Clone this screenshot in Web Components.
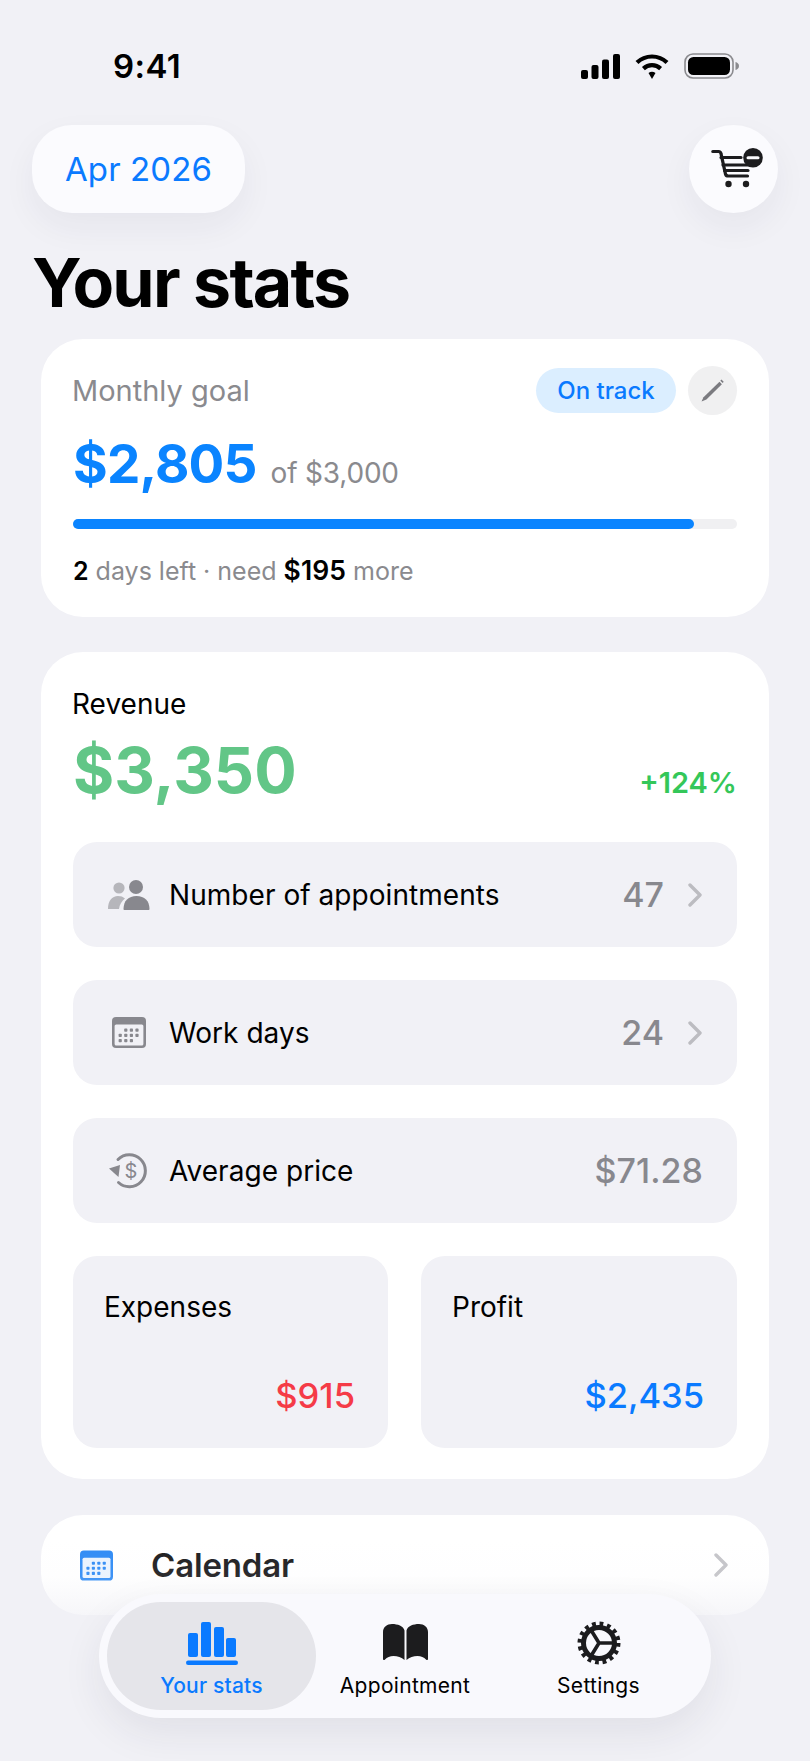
<!DOCTYPE html>
<html lang="en">
<head>
<meta charset="utf-8">
<title>Your stats</title>
<style>
  html, body { margin: 0; background: #f1f1f6; }
  body { font-family: Inter, "Noto Sans", "Liberation Sans", sans-serif; color: #000; }
</style>
</head>
<body>

<stats-app>
  <status-bar time="9:41"></status-bar>
  <top-bar label="Apr 2026"></top-bar>
  <page-title>Your stats</page-title>

  <goal-card></goal-card>

  <revenue-card>
    <stat-row icon="people" value="47" chevron>Number of appointments</stat-row>
    <stat-row icon="calendar" value="24" chevron>Work days</stat-row>
    <stat-row icon="price" value="$71.28">Average price</stat-row>
    <mini-stats>
      <mini-stat label="Expenses" value="$915" color="#f53b47"></mini-stat>
      <mini-stat label="Profit" value="$2,435" color="#0a7aff"></mini-stat>
    </mini-stats>
  </revenue-card>

  <calendar-row>Calendar</calendar-row>

  <tab-bar>
    <tab-item icon="bars" active>Your stats</tab-item>
    <tab-item icon="book">Appointment</tab-item>
    <tab-item icon="gear">Settings</tab-item>
  </tab-bar>
</stats-app>

<script>
const chevron = (c) => `<svg width="16" height="24" viewBox="0 0 16 24" fill="none"><path d="M3 2 13 12 3 22" stroke="${c}" stroke-width="3.4" stroke-linecap="round" stroke-linejoin="round"/></svg>`

const calendarIcon = (w, h, main, bg) => {
  let dots = ""
  // 3 rows of dots, the first one starts at the second column
  for (let r = 0; r < 3; r++) {
    for (let c = 0; c < 4; c++) {
      if (r == 0 && c == 0) continue
      if (r == 2 && c == 3) continue
      dots += `<rect x="${6.6 + c * 5.6}" y="${11.6 + r * 5.2}" width="3.2" height="3.2" rx=".8" fill="${main}"/>`
    }
  }
  return `<svg width="${w}" height="${h}" viewBox="0 0 34 31"><rect width="34" height="31" rx="4" fill="${main}"/><rect x="2.600" y="7.500" width="28.800" height="21" rx="1.600" fill="${bg}"/>${dots}</svg>`
}

const icons = {
  people: `<svg width="42" height="30" viewBox="0 0 42 30"><circle cx="11" cy="8" r="5.6" fill="#b6b6bb"/><path d="M0 29c0-8 4-13 10-13 3 0 5 .8 7 2.5-3 2.500-5.500 6-6 10.500z" fill="#b6b6bb"/><circle cx="28" cy="7" r="7" fill="#88888e"/><path d="M15.500 29c0-8 5-13 13-13s13 5 13 13c0 .6-.4 1-1 1h-24c-.6 0-1-.4-1-1z" fill="#88888e"/></svg>`,
  calendar: calendarIcon(34, 31, "#88888e", "#f1f1f6"),
  price: `<svg width="40" height="36" viewBox="0 0 40 36" fill="none"><path d="M9 6.500A16 16 0 1 1 9.500 29.500" stroke="#88888e" stroke-width="3" stroke-linecap="round"/><path d="M0 15.500 11 12 9.500 24z" fill="#88888e"/><text x="22" y="25" text-anchor="middle" font-family="Inter, sans-serif" font-size="20" fill="#88888e">$</text></svg>`,
  bars: `<svg width="52" height="43" viewBox="0 0 52 43" fill="#0a7aff"><rect x="2" y="11" width="10" height="24" rx="2"/><rect x="15" y="0" width="10" height="35" rx="2"/><rect x="28" y="5" width="10" height="30" rx="2"/><rect x="40" y="16" width="10" height="19" rx="2"/><rect y="38.500" width="52" height="4.500" rx="2.200"/></svg>`,
  book: `<svg width="45" height="38" viewBox="0 0 45 38" fill="#1c1c1e"><path d="M0 8C0 3 4 0 9 0c5.500 0 11.500 2 12.500 6.500V36c-3-2.800-7-4-11-4-3.500 0-6.500 1.200-8.500 3.600-.8.900-2 .5-2-.6z"/><path d="M45 8c0-5-4-8-9-8-5.500 0-11.500 2-12.500 6.500V36c3-2.800 7-4 11-4 3.500 0 6.500 1.200 8.500 3.600.8.900 2 .5 2-.6z"/></svg>`,
  gear: `<svg width="44" height="44" viewBox="0 0 44 44" fill="none" stroke="#1c1c1e"><circle cx="22" cy="22" r="15.500" stroke-width="5"/><circle cx="22" cy="22" r="19" stroke-width="5" stroke-dasharray="3.730 3.730"/><path d="M22 22 37 22M22 22 14 9M22 22 14 35" stroke-width="3.600"/></svg>`
}

const define = (name, css, html) => {
  customElements.define(name, class extends HTMLElement {
    connectedCallback() {
      if (this.shadowRoot) return
      this.attachShadow({ mode: "open" })
      this.shadowRoot.innerHTML = `<style>${css}</style>` + html(this)
    }
  })
}

define("stats-app", `
  :host { display: block; position: relative; width: 810px; height: 1761px; overflow: hidden; background: #f1f1f6; }
  .fade { position: absolute; left: 0; right: 0; top: 1540px; height: 82px; background: linear-gradient(rgba(241,241,246,0), rgba(241,241,246,.08) 45%, rgba(241,241,246,.75)); pointer-events: none; z-index: 1; }
`, () => `
  <slot></slot>
  <div class="fade"></div>
`)

define("page-title", `
  :host { display: block; height: 126px; box-sizing: border-box; padding: 29px 0 0 32px; font-size: 68px; line-height: 80px; font-weight: 700; letter-spacing: -1.8px; }
`, () => `<slot></slot>`)

define("status-bar", `
  :host { display: flex; align-items: center; justify-content: space-between; height: 52px; padding: 40px 71px 33px 113px; font-family: Inter, sans-serif; }
  .time { font-size: 33px; font-weight: 600; letter-spacing: .4px; line-height: 52px; }
  .icons { display: flex; align-items: center; gap: 15px; }
`, (el) => `
  <span class="time">${el.getAttribute("time")}</span>
  <span class="icons">
    <svg width="39" height="25" viewBox="0 0 39 25"><rect y="16" width="7" height="9" rx="2"/><rect x="10.500" y="11" width="7" height="14" rx="2"/><rect x="21" y="5.500" width="7" height="19.500" rx="2"/><rect x="32" y="0" width="7" height="25" rx="2"/></svg>
    <svg width="34" height="25" viewBox="0 0 34 25" fill="none" stroke="#000" stroke-width="4.200"><path d="M2 8.600A21.500 21.500 0 0 1 32 8.600"/><path d="M8.400 14.600A12.600 12.600 0 0 1 25.600 14.600"/><path d="M13.500 19 17 25 20.500 19A6 6 0 0 0 13.500 19Z" fill="#000" stroke="none"/></svg>
    <svg width="55" height="26" viewBox="0 0 55 26"><rect x="1" y="1" width="48" height="24" rx="8" fill="none" stroke="#8a8a8e" stroke-width="1.600"/><rect x="4" y="4" width="42" height="18" rx="5.500"/><path d="M51.500 9c2 .5 3.500 2 3.500 4s-1.500 3.500-3.500 4z" fill="#8a8a8e"/></svg>
  </span>
`)

define("top-bar", `
  :host { display: flex; justify-content: space-between; padding: 0 32px; height: 88px; }
  .pill, .round { background: #fbfbfe; box-shadow: 0 14px 34px rgba(40,40,70,.055); display: flex; align-items: center; justify-content: center; }
  .pill { width: 213px; height: 88px; border-radius: 40px; color: #0a7aff; font-size: 33px; font-weight: 400; letter-spacing: .1px; }
  .round { width: 89px; height: 88px; border-radius: 50%; }
  .round svg { margin-left: 6px; }
`, (el) => `
  <div class="pill">${el.getAttribute("label")}</div>
  <div class="round">
    <svg width="52" height="42" viewBox="0 0 52 42" fill="none" stroke="#1c1c1e" stroke-width="3.200" stroke-linecap="round">
      <path d="M1.800 3.500H7.500C9 3.500 9.800 4.500 10 5.700L14.500 26C14.900 27.500 15.800 28 17.200 28H36.500"/>
      <path d="M10 9.500H30M12 17H40M13.500 22.500H37" />
      <circle cx="17.500" cy="36" r="3.200" fill="#1c1c1e" stroke="none"/><circle cx="35" cy="36" r="3.200" fill="#1c1c1e" stroke="none"/>
      <circle cx="42" cy="9.800" r="9.800" fill="#1c1c1e" stroke="none"/><path d="M37 9.800H47" stroke="#fbfbfe" stroke-width="3"/>
    </svg>
  </div>
`)

define("goal-card", `
  :host { display: block; box-sizing: border-box; width: 728px; height: 278px; margin: 0 0 35px 41px; padding: 27px 32px 0; background: #fff; border-radius: 42px; }
  .head { display: flex; align-items: center; height: 49px; }
  .name { flex: 1; color: #8a8a8e; font-size: 29px; letter-spacing: 0; margin-left: -1px; }
  .badge { width: 140px; height: 45px; border-radius: 23px; background: #dbeeff; color: #0a7aff; font-size: 24px; font-weight: 500; display: flex; align-items: center; justify-content: center; }
  .edit { width: 49px; height: 49px; border-radius: 50%; background: #f0f0f1; margin-left: 12px; display: flex; align-items: center; justify-content: center; }
  .amount { display: flex; align-items: baseline; gap: 14px; margin-top: 10px; height: 75px; line-height: 79px; }
  .big { color: #0a84ff; font-size: 53px; font-weight: 700; letter-spacing: -.8px; }
  .of { color: #8a8a8e; font-size: 28px; letter-spacing: -.2px; }
  .track { height: 10px; margin-top: 19px; border-radius: 5px; background: #f0f0f2; }
  .fill { width: 621px; height: 10px; border-radius: 5px; background: #0a84ff; }
  .left { margin-top: 23px; color: #8a8a8e; font-size: 25px; line-height: 36px; }
  .left b { color: #000; font-weight: 600; }
  .left b + b { font-size: 26.500px; letter-spacing: .1px; }
`, () => `
  <div class="head">
    <span class="name">Monthly goal</span>
    <span class="badge">On track</span>
    <span class="edit"><svg width="25" height="25" viewBox="0 0 25 25"><path d="M19.500 3.800 21.900 6.200 6.400 21.500 1.500 23.500 3.500 19.200z" fill="#7b7b80"/><path d="M21.400 1.400 23.700 3.700 22.700 5 20.300 2.700z" fill="#7b7b80"/></svg></span>
  </div>
  <div class="amount"><span class="big">$2,805</span><span class="of">of $3,000</span></div>
  <div class="track"><div class="fill"></div></div>
  <div class="left"><b>2</b> days left · need <b>$195</b> more</div>
`)

define("revenue-card", `
  :host { display: block; box-sizing: border-box; width: 728px; height: 827px; margin: 0 0 36px 41px; padding: 32px 32px 0; background: #fff; border-radius: 42px; }
  .label { font-size: 28px; line-height: 40px; height: 40px; margin-left: -1px; }
  .line { display: flex; justify-content: space-between; align-items: baseline; height: 86px; line-height: 92px; margin-bottom: 32px; }
  .big { color: #62c687; font-size: 63px; font-weight: 700; letter-spacing: 0; }
  .pct { color: #34c759; font-size: 29px; font-weight: 600; }
  .rows { display: flex; flex-direction: column; gap: 33px; }
`, () => `
  <div class="label">Revenue</div>
  <div class="line"><span class="big">$3,350</span><span class="pct">+124%</span></div>
  <div class="rows"><slot></slot></div>
`)

define("stat-row", `
  :host { display: flex; align-items: center; height: 105px; padding: 0 34px 0 35px; border-radius: 24px; background: #f1f1f6; font-size: 28px; letter-spacing: .05px; }
  .icon { width: 42px; display: flex; justify-content: center; align-items: center; margin-right: 19px; }
  .text { flex: 1; }
  .val { color: #88888e; font-size: 34px; font-weight: 500; }
  .chev { margin-left: 23px; display: flex; }
`, (el) => `
  <span class="icon">${icons[el.getAttribute("icon")]}</span>
  <span class="text"><slot></slot></span>
  <span class="val">${el.getAttribute("value")}</span>
  ${el.hasAttribute("chevron") ? `<span class="chev">${chevron("#bcbcc1")}</span>` : ""}
`)

define("mini-stats", `
  :host { display: grid; grid-template-columns: 315px 316px; gap: 33px; }
`, () => `<slot></slot>`)

define("mini-stat", `
  :host { display: flex; flex-direction: column; justify-content: space-between; height: 192px; box-sizing: border-box; padding: 31px 33px 30px 31px; border-radius: 24px; background: #f1f1f6; }
  .label { font-size: 28px; line-height: 40px; }
  .val { text-align: right; font-size: 34.500px; font-weight: 500; line-height: 44px; }
`, (el) => `
  <div class="label">${el.getAttribute("label")}</div>
  <div class="val" style="color:${el.getAttribute("color")}">${el.getAttribute("value")}</div>
`)

define("calendar-row", `
  :host { display: flex; align-items: center; box-sizing: border-box; width: 728px; height: 100px; margin-left: 41px; padding: 0 40px 0 39px; background: #fff; border-radius: 42px; }
  .icon { display: flex; width: 33px; margin-right: 38px; }
  .text { flex: 1; color: #1c1c1e; font-size: 33px; font-weight: 600; letter-spacing: -.15px; }
  .chev { display: flex; }
`, () => `
  <span class="icon">${calendarIcon(33, 31, "#2f8bf5", "#eaf3fe")}</span>
  <span class="text"><slot></slot></span>
  <span class="chev">${chevron("#c4c4c8")}</span>
`)

define("tab-bar", `
  :host { position: absolute; left: 99px; top: 1594px; z-index: 2; box-sizing: border-box; width: 612px; height: 124px; padding: 8px; border-radius: 62px; background: #f9f9fd; box-shadow: 0 16px 40px rgba(40,40,70,.08); display: grid; grid-template-columns: 209px 178px 1fr; }
`, () => `<slot></slot>`)

define("tab-item", `
  :host { display: flex; flex-direction: column; align-items: center; height: 108px; box-sizing: border-box; padding-top: 19px; color: #000; font-size: 21px; font-weight: 400; letter-spacing: .3px; border-radius: 54px; }
  :host([active]) { background: #e5e5ea; color: #0a7aff; font-weight: 500; letter-spacing: .2px; }
  .ic { display: flex; align-items: center; justify-content: center; height: 44px; }
  .tx { margin-top: 7px; line-height: 28px; }
`, (el) => `
  <span class="ic">${icons[el.getAttribute("icon")]}</span>
  <span class="tx"><slot></slot></span>
`)
</script>
</body>
</html>
